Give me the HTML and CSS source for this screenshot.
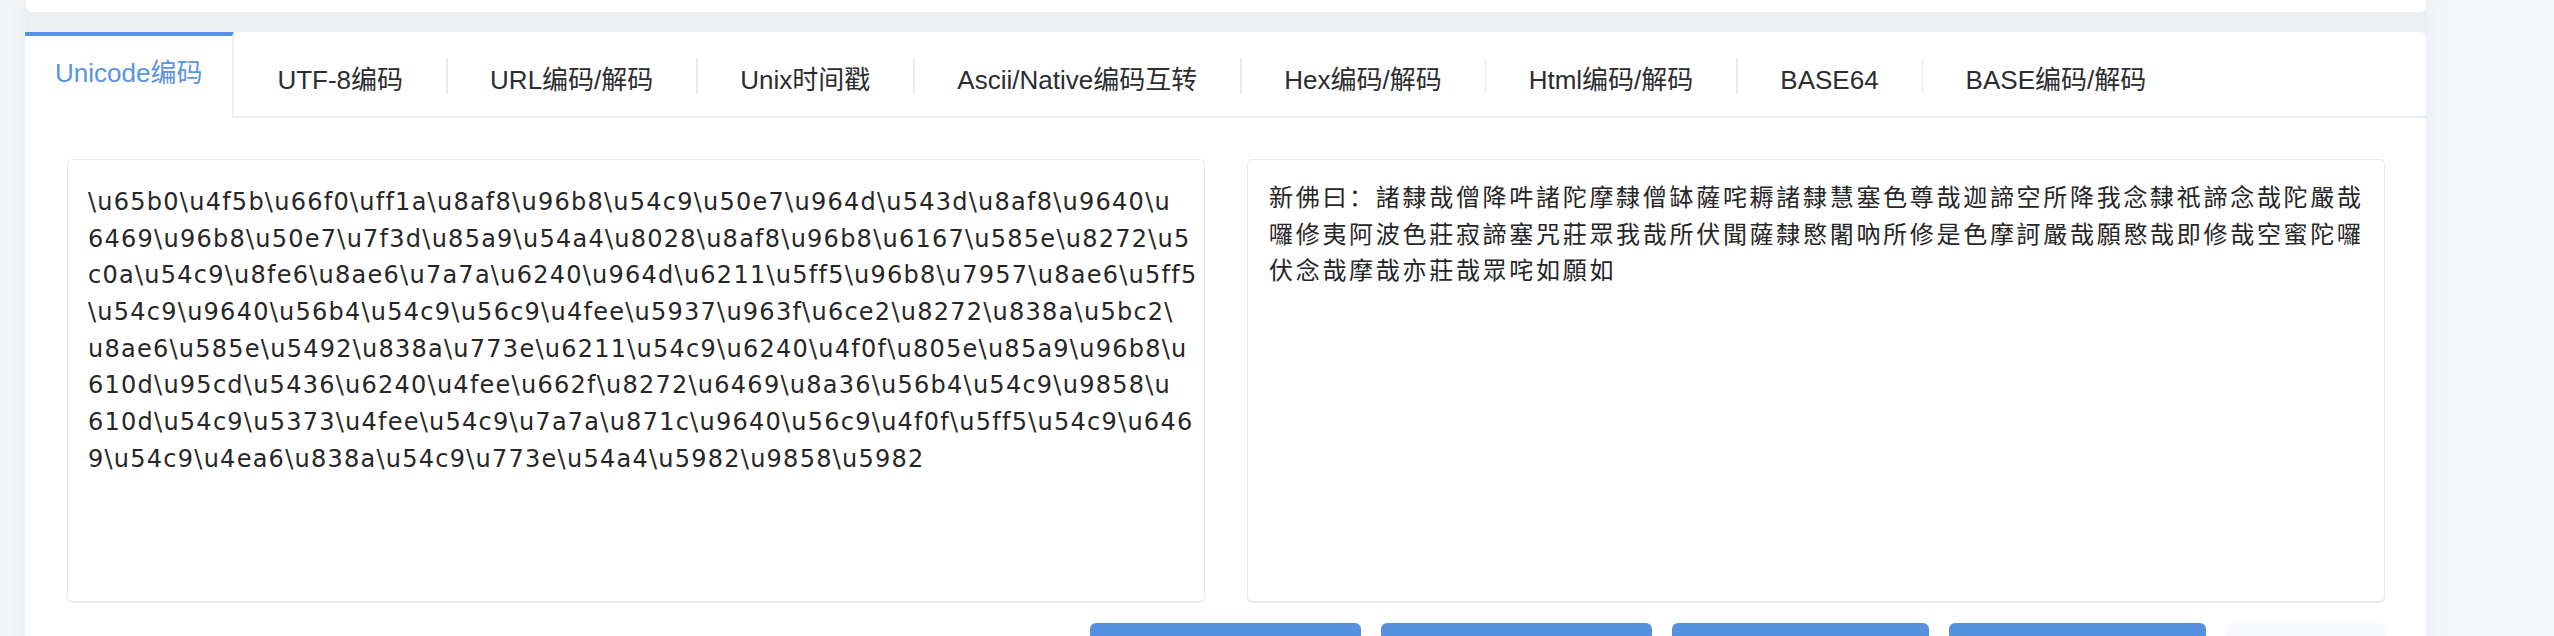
FILE: index.html
```html
<!DOCTYPE html>
<html lang="zh-CN">
<head>
<meta charset="utf-8">
<title>Unicode编码</title>
<link rel="stylesheet" href="styles.css">
</head>
<body>
<div class="main">
  <div class="card card-top"></div>
  <div class="card card-tool">
    <div class="tabs">
      <div class="tab active">Unicode编码</div>
      <div class="tab">UTF-8编码</div>
      <div class="tab sep">URL编码/解码</div>
      <div class="tab sep">Unix时间戳</div>
      <div class="tab sep">Ascii/Native编码互转</div>
      <div class="tab sep">Hex编码/解码</div>
      <div class="tab sep">Html编码/解码</div>
      <div class="tab sep">BASE64</div>
      <div class="tab sep">BASE编码/解码</div>
    </div>
    <div class="panes">
      <div class="box box-code">\u65b0\u4f5b\u66f0\uff1a\u8af8\u96b8\u54c9\u50e7\u964d\u543d\u8af8\u9640\u<br>6469\u96b8\u50e7\u7f3d\u85a9\u54a4\u8028\u8af8\u96b8\u6167\u585e\u8272\u5<br>c0a\u54c9\u8fe6\u8ae6\u7a7a\u6240\u964d\u6211\u5ff5\u96b8\u7957\u8ae6\u5ff5<br>\u54c9\u9640\u56b4\u54c9\u56c9\u4fee\u5937\u963f\u6ce2\u8272\u838a\u5bc2\<br>u8ae6\u585e\u5492\u838a\u773e\u6211\u54c9\u6240\u4f0f\u805e\u85a9\u96b8\u<br>610d\u95cd\u5436\u6240\u4fee\u662f\u8272\u6469\u8a36\u56b4\u54c9\u9858\u<br>610d\u54c9\u5373\u4fee\u54c9\u7a7a\u871c\u9640\u56c9\u4f0f\u5ff5\u54c9\u646<br>9\u54c9\u4ea6\u838a\u54c9\u773e\u54a4\u5982\u9858\u5982</div>
      <div class="box box-text">新佛曰：諸隸哉僧降吽諸陀摩隸僧缽薩咤耨諸隸慧塞色尊哉迦諦空所降我念隸祇諦念哉陀嚴哉<br>囉修夷阿波色莊寂諦塞咒莊眾我哉所伏聞薩隸愍闍吶所修是色摩訶嚴哉願愍哉即修哉空蜜陀囉<br>伏念哉摩哉亦莊哉眾咤如願如</div>
    </div>
    <div class="actions">
      <button class="btn btn-primary btn-w1" aria-label="中文转Unicode"></button>
      <button class="btn btn-primary btn-w1" aria-label="Unicode转中文"></button>
      <button class="btn btn-primary btn-w2" aria-label="中文转&amp;#XXXX"></button>
      <button class="btn btn-primary btn-w2" aria-label="&amp;#XXXX转中文"></button>
      <button class="btn btn-plain btn-w3" aria-label="清空"></button>
    </div>
  </div>
</div>
</body>
</html>
```

FILE: styles.css
```css
html, body {
  margin: 0;
  padding: 0;
}
body {
  width: 2554px;
  height: 636px;
  overflow: hidden;
  background: #f4f6f9;
  font-family: "Liberation Sans", Arial, "Noto Sans CJK SC", sans-serif;
  color: #303133;
}
.main {
  margin-left: 25px;
  width: 2401px;
  background: #eceef2;
  box-shadow: 0 0 22px 6px rgba(40, 60, 90, 0.035);
  display: flex;
  flex-direction: column;
  gap: 20px;
  min-height: 700px;
}
.card {
  background: #ffffff;
}
.card-top {
  height: 12px;
  margin-left: 1px;
  border-radius: 0 0 6px 6px;
}
.card-tool {
  border-radius: 6px 6px 0 0;
  flex: 1;
}
.tabs {
  display: flex;
  height: 84px;
  border-bottom: 2px solid #eceef1;
}
.tab {
  position: relative;
  box-sizing: border-box;
  height: 84px;
  padding: 33px 43px 0 43px;
  line-height: 30px;
  font-size: 26px;
  color: #2b2d30;
  white-space: nowrap;
}
.tab.sep {
  border-left: 1px solid transparent;
}
.tab.sep::before {
  content: "";
  position: absolute;
  left: -1px;
  top: 26px;
  width: 1.5px;
  height: 36px;
  background: #e9ebef;
}
.tab.active {
  height: 86px;
  margin-bottom: -2px;
  padding: 22px 30px 0 30px;
  border-top: 4px solid #5690e0;
  border-right: 2px solid #eceef1;
  color: #5a93e2;
  background: #ffffff;
}
.panes {
  display: flex;
  gap: 42px;
  padding: 41px 41px 0 42px;
}
.box {
  box-sizing: border-box;
  width: 1138px;
  height: 444px;
  border: 1px solid #e7e9ec;
  border-bottom: 2px solid #e8eaed;
  border-radius: 6px;
  padding: 24px 20px 0 20px;
  font-size: 24px;
  line-height: 36.67px;
  color: #262626;
  white-space: nowrap;
  overflow: hidden;
}
.box-code {
  font-family: "DejaVu Sans", "Liberation Sans", sans-serif;
  letter-spacing: 1.25px;
}
.box-text {
  letter-spacing: 2.7px;
  padding-top: 20px;
  padding-left: 21px;
}
.actions {
  display: flex;
  justify-content: flex-end;
  gap: 20px;
  padding: 20px 41px 0 0;
}
.btn {
  box-sizing: border-box;
  height: 64px;
  border: none;
  border-radius: 6px;
  padding: 0;
}
.btn-primary {
  background: #5691e0;
}
.btn-plain {
  background: #f7f9fd;
}
.btn-w1 { width: 271px; }
.btn-w2 { width: 257px; }
.btn-w3 { width: 159px; }
```
